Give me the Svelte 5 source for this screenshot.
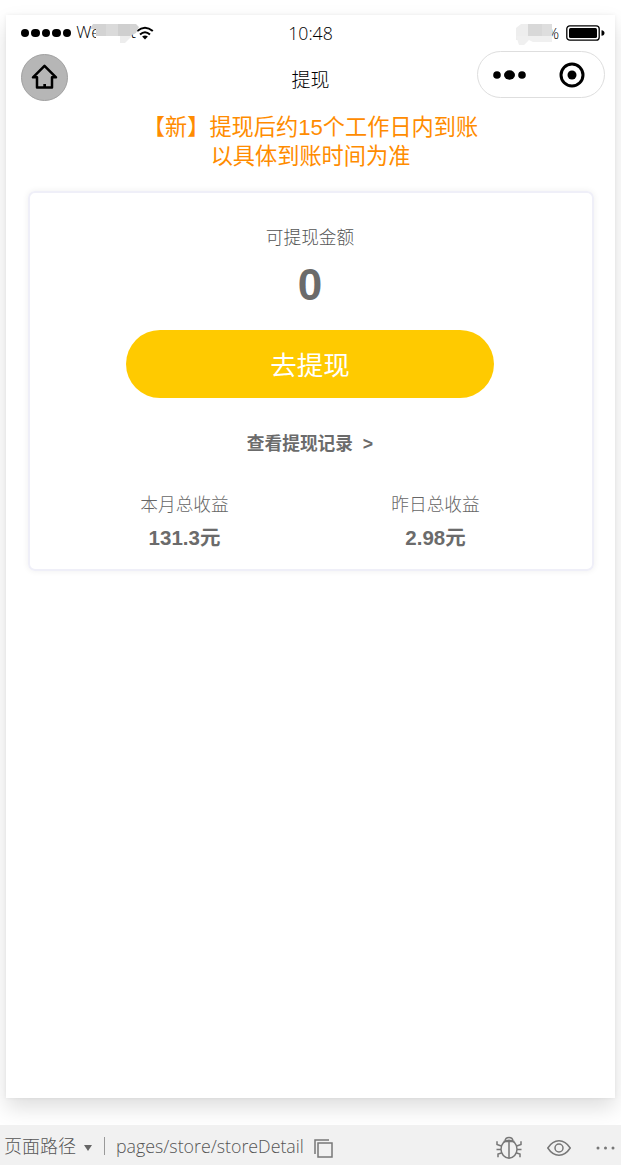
<script lang="ts">
	const signals = [0, 1, 2, 3, 4];

	const notices = ['【新】提现后约15个工作日内到账', '以具体到账时间为准'];

	const balance = 0;

	const earnings = [
		{ label: '本月总收益', value: '131.3元' },
		{ label: '昨日总收益', value: '2.98元' }
	];
</script>

<div class="simulator">
	<main class="phone">
		<header class="status">
			<div class="side">
				<span class="signals">
					{#each signals as s (s)}
						<i></i>
					{/each}
				</span>
				<span class="carrier">
					WeChat
					<svg class="carrier-mask" width="50" height="20" viewBox="0 0 50 20">
						<path d="M6 4h33v10H6z" fill="#fff" />
						<path d="M1 3l2-3h43l3 3-3 6-6 3H6V5H1z" fill="#d3d3d3" />
						<path d="M16 0h12v12H16z" fill="#dadada" />
						<path d="M28 0h12v12H28z" fill="#cfcfcf" />
						<path d="M30 12h12l-4 4-3 3h-5z" fill="#ededed" />
					</svg>
				</span>
				<svg class="wifi" width="18" height="14" viewBox="0 0 18 14">
					<path d="M1.2 5.1Q9-1.7 16.8 5.1M4 8.5Q9 4 14 8.5" fill="none" stroke="#000" stroke-width="2" />
					<path d="M6.1 10.6Q9 8.5 11.9 10.6L9 13.5z" />
				</svg>
			</div>
			<time>10:48</time>
			<div class="side end">
				<span class="percent">
					100%
					<svg class="percent-mask" width="36" height="24" viewBox="0 0 36 24">
						<path d="M0 5l5-4h7v12H5v4H0z" fill="#eee" />
						<path d="M12 1h14v12H12z" fill="#d8d8d8" />
						<path d="M26 1h10v15H26z" fill="#dedede" />
						<path d="M0 13h36v6H17l-4-2-5 5H3z" fill="#f0f0f0" />
					</svg>
				</span>
				<svg class="battery" width="39" height="16" viewBox="0 0 39 16">
					<rect x=".8" y=".8" width="32.4" height="14.4" rx="3" fill="#fff" stroke="#000" stroke-width="1.3" />
					<rect x="3" y="3" width="28" height="10" rx="1.5" />
					<path d="M35.5 5.2q3 .4 3 2.8t-3 2.8z" />
				</svg>
			</div>
		</header>

		<nav>
			<button class="home" aria-label="home">
				<svg width="27" height="26" viewBox="0 0 27 26">
					<path
						d="M13.5 1.8L2 13.3h4v10.2h15V13.3h4z"
						fill="none"
						stroke="#000"
						stroke-width="2.5"
						stroke-linejoin="round"
					/>
					<path d="M12.3 20h2.7v3h-2.7z" />
				</svg>
			</button>
			<h1>提现</h1>
			<div class="capsule">
				<svg width="34" height="10" viewBox="0 0 34 10">
					<circle cx="4" cy="5" r="3.8" />
					<ellipse cx="16.5" cy="5" rx="5.5" ry="4.7" />
					<circle cx="29" cy="5" r="3.8" />
				</svg>
				<svg width="26" height="26" viewBox="0 0 26 26">
					<circle cx="13" cy="13" r="11" fill="none" stroke="#000" stroke-width="3" />
					<circle cx="13" cy="13" r="4.5" />
				</svg>
			</div>
		</nav>

		<section class="notice">
			{#each notices as line (line)}
				<p>{line}</p>
			{/each}
		</section>

		<section class="card">
			<p class="label">可提现金额</p>
			<strong class="balance">{balance}</strong>
			<button class="withdraw">去提现</button>
			<a class="records" href="#records">查看提现记录&nbsp; &gt;</a>
			<div class="earnings">
				{#each earnings as item (item.label)}
					<div class="item">
						<span>{item.label}</span>
						<strong>{item.value}</strong>
					</div>
				{/each}
			</div>
		</section>
	</main>

	<footer>
		<span class="path-label">页面路径</span>
		<i class="caret"></i>
		<i class="divider"></i>
		<span class="path">pages/store/storeDetail</span>
		<svg class="copy" width="19" height="19" viewBox="0 0 19 19">
			<path d="M1 15V1h14" />
			<rect x="4" y="4" width="14" height="14" />
		</svg>
		<div class="tools">
			<svg width="26" height="24" viewBox="0 0 26 24">
				<ellipse cx="13" cy="13.2" rx="8" ry="9" />
				<path
					d="M9 5.2Q9.3 1.5 13 1.5T17 5.2M7.5 5.5h11M13 5.5v16.5M5.3 10L1 8.5V5.2M20.7 10L25 8.5V5.2M5 13.5H.5M21 13.5h4.5M5.5 17L2 18v3.3M20.5 17l3.5 1v3.3"
				/>
			</svg>
			<svg width="24" height="16" viewBox="0 0 24 16">
				<path d="M.8 8Q5.5.8 12 .8T23.2 8Q18.5 15.2 12 15.2T.8 8z" />
				<circle cx="12" cy="8" r="4" />
			</svg>
			<svg class="more" width="20" height="4" viewBox="0 0 20 4">
				<circle cx="2" cy="2" r="1.5" />
				<circle cx="9.5" cy="2" r="1.5" />
				<circle cx="17" cy="2" r="1.5" />
			</svg>
		</div>
	</footer>
</div>

<style>
	:global(body) {
		margin: 0;
		background: #fff;
	}

	.simulator {
		display: flex;
		flex-direction: column;
		height: 1165px;
		overflow: hidden;
		box-sizing: border-box;
		padding-top: 15px;
		font-family: 'Liberation Sans', 'Noto Sans CJK SC', sans-serif;
		color: #6b6b6b;
	}

	p,
	h1 {
		margin: 0;
	}

	button {
		padding: 0;
		font-family: inherit;
	}

	.phone {
		display: flex;
		flex-direction: column;
		box-sizing: border-box;
		width: 609px;
		height: 1083px;
		margin-left: 6px;
		background: #fff;
		box-shadow:
			0 10px 20px rgba(0, 0, 0, 0.13),
			0 0 4px rgba(0, 0, 0, 0.06);
	}

	.status {
		display: grid;
		grid-template-columns: 1fr auto 1fr;
		align-items: center;
		height: 36px;
		padding: 0 10px 0 15px;
		font: 300 17px/34px 'Open Sans', sans-serif;
		color: #000;
	}

	.status time {
		margin-right: 5px;
		font-size: 17.7px;
	}

	.side {
		display: flex;
		align-items: center;
	}

	.side.end {
		justify-content: flex-end;
	}

	.signals {
		display: flex;
		gap: 2.3px;
		margin-right: 5px;
	}

	.signals i {
		width: 8.2px;
		height: 8.2px;
		border-radius: 50%;
		background: #000;
	}

	.carrier,
	.percent {
		position: relative;
	}

	.carrier {
		width: 60px;
		height: 36px;
	}

	.carrier-mask {
		position: absolute;
		left: 14px;
		top: 9px;
	}

	.percent {
		margin-right: 7px;
		font-size: 15px;
	}

	.percent-mask {
		position: absolute;
		right: 7px;
		top: 7px;
	}

	nav {
		display: flex;
		align-items: center;
		justify-content: space-between;
		height: 47px;
		padding: 0 10px 0 15px;
	}

	.home {
		display: grid;
		place-items: center;
		width: 47px;
		height: 47px;
		margin-top: 5px;
		margin-right: 76px;
		border: 1px solid #a0a0a0;
		border-radius: 50%;
		background: #b6b6b6;
	}

	h1 {
		margin-top: 8px;
		font-size: 19px;
		font-weight: 300;
		color: #000;
	}

	.capsule {
		display: flex;
		align-items: center;
		justify-content: space-between;
		box-sizing: border-box;
		width: 128px;
		height: 47px;
		padding: 0 19px 0 15px;
		border: 1px solid #dedede;
		border-radius: 24px;
	}

	.notice {
		padding-top: 15px;
		text-align: center;
		font-size: 22.2px;
		line-height: 29px;
		color: #ff8c00;
	}

	.card {
		display: flex;
		flex-direction: column;
		align-items: center;
		box-sizing: border-box;
		width: 566px;
		height: 380px;
		margin: 20px 0 0 22px;
		padding: 32px 2px 0 0;
		border: 2px solid #efeff8;
		border-radius: 7px;
		box-shadow: 0 0 6px rgba(0, 0, 0, 0.07);
	}

	.label {
		font-size: 17.7px;
		font-weight: 300;
		line-height: 26px;
		color: #555;
	}

	.balance {
		margin-top: 9px;
		font-size: 44px;
		line-height: 50px;
	}

	.withdraw {
		width: 368px;
		height: 68px;
		margin-top: 20px;
		padding-bottom: 2px;
		border: 0;
		border-radius: 34px;
		background: #ffca00;
		font-size: 26.5px;
		color: #fff;
	}

	.records {
		margin-top: 33px;
		font-size: 17.7px;
		font-weight: 700;
		line-height: 26px;
		color: #6b6b6b;
		text-decoration: none;
	}

	.earnings {
		display: grid;
		grid-template-columns: 251px 251px;
		margin-top: 34px;
		text-align: center;
	}

	.item {
		display: flex;
		flex-direction: column;
	}

	.item span {
		font-size: 17.7px;
		font-weight: 300;
		line-height: 28px;
		color: #666;
	}

	.item strong {
		font-size: 20.5px;
		line-height: 38px;
	}

	footer {
		display: flex;
		align-items: center;
		box-sizing: border-box;
		height: 40px;
		margin-top: 27px;
		padding: 2px 6px 0 4px;
		background: #f1f1f1;
		font: 300 17.8px/36px 'Open Sans', 'Noto Sans CJK SC', sans-serif;
		color: #555;
	}

	footer svg {
		fill: none;
		stroke: #777;
		stroke-width: 1.5;
	}

	.path-label {
		font-size: 18px;
	}

	.caret {
		margin: 4px 12px 0 8px;
		border: 4.5px solid transparent;
		border-top: 6px solid #666;
		border-bottom: 0;
	}

	.divider {
		width: 1px;
		height: 18px;
		margin-right: 11px;
		background: #999;
	}

	.copy {
		margin: 4px 0 0 10px;
	}

	.tools {
		display: flex;
		align-items: center;
		gap: 25px;
		margin-left: auto;
		padding-top: 3px;
	}

	footer .more {
		margin-right: -1px;
		fill: #777;
		stroke: none;
	}
</style>
